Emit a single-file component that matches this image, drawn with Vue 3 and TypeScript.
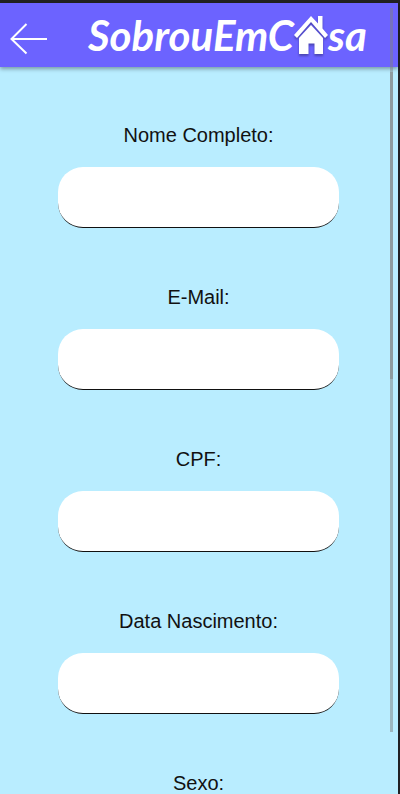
<script setup lang="ts">
interface Field {
  id: string
  label: string
  type: string
}

const fields: Field[] = [
  { id: 'nome', label: 'Nome Completo:', type: 'text' },
  { id: 'email', label: 'E-Mail:', type: 'email' },
  { id: 'cpf', label: 'CPF:', type: 'text' },
  { id: 'nascimento', label: 'Data Nascimento:', type: 'text' },
  { id: 'sexo', label: 'Sexo:', type: 'text' },
]
</script>

<template>
  <div class="screen">
    <header class="bar">
      <button class="back" type="button" aria-label="Voltar">
        <svg width="38" height="32" viewBox="0 0 38 32" fill="none" stroke="#fff" stroke-width="2">
          <path d="M37 16H2M16.500 1L1.500 16L16.500 30.500" />
        </svg>
      </button>
      <div class="logo">
        <span>SobrouEmC</span>
        <svg class="house" width="34" height="42" viewBox="1 0 34 42" fill="#fff">
          <path d="M1 21L18 2L25 9.500V2H29.500V14.500L35 21L32 24L18 8L4 24Z" />
          <path d="M6 24L18 11L30 24V40H21.500V29.500H15.500V40H6Z" />
        </svg>
        <span>sa</span>
      </div>
    </header>
    <main class="content">
      <form class="form">
        <div v-for="field in fields" :key="field.id" class="field">
          <label :for="field.id">{{ field.label }}</label>
          <input :id="field.id" :name="field.id" :type="field.type" />
        </div>
      </form>
    </main>
    <div class="thumb thumb-page"></div>
    <div class="thumb thumb-content"></div>
  </div>
</template>

<style>
body {
  background: #b9edff;
}
</style>

<style scoped>
.screen {
  position: relative;
  box-sizing: border-box;
  height: 100vh;
  display: flex;
  flex-direction: column;
  border-top: 3px solid #222;
  border-right: 2px solid #202024;
  background: #b9edff;
  color: #111;
  font-family: "Liberation Sans", Arial, sans-serif;
}

.bar {
  z-index: 1;
  flex: none;
  display: flex;
  align-items: center;
  gap: 40px;
  height: 64px;
  padding: 0 32px 0 10px;
  box-sizing: border-box;
  background: #6c63ff;
  box-shadow: 0 2px 4px rgba(0, 0, 0, 0.35);
}

.back {
  display: flex;
  padding: 8px 0 0;
  border: 0;
  background: none;
  cursor: pointer;
}

.logo {
  display: flex;
  align-items: center;
  color: #fff;
  font-family: Lato, sans-serif;
  font-size: 42px;
  font-style: italic;
  font-weight: 700;
  line-height: 48px;
}

.house {
  flex: none;
  filter: drop-shadow(0 2px 1px rgba(0, 0, 0, 0.3));
}

.content {
  flex: 1;
  min-height: 0;
  overflow-y: auto;
  scrollbar-width: none;
}

.form {
  display: flex;
  flex-direction: column;
  gap: 57px;
  padding: 56px 1px 56px 0;
}

.field {
  display: flex;
  flex-direction: column;
  align-items: center;
  gap: 20px;
}

label {
  font-size: 20px;
  line-height: 24px;
}

input {
  box-sizing: border-box;
  width: 71%;
  height: 61px;
  padding: 0 24px;
  border: 0;
  border-bottom: 1px solid #111;
  border-radius: 25px;
  background: #fff;
  font: inherit;
  font-size: 20px;
  outline: none;
}

.thumb {
  position: absolute;
  z-index: 2;
  right: 5px;
  width: 3px;
  background: rgba(127, 127, 127, 0.5);
  pointer-events: none;
}

.thumb-page {
  top: 5px;
  height: 371px;
}

.thumb-content {
  top: 69px;
  height: 660px;
}
</style>
